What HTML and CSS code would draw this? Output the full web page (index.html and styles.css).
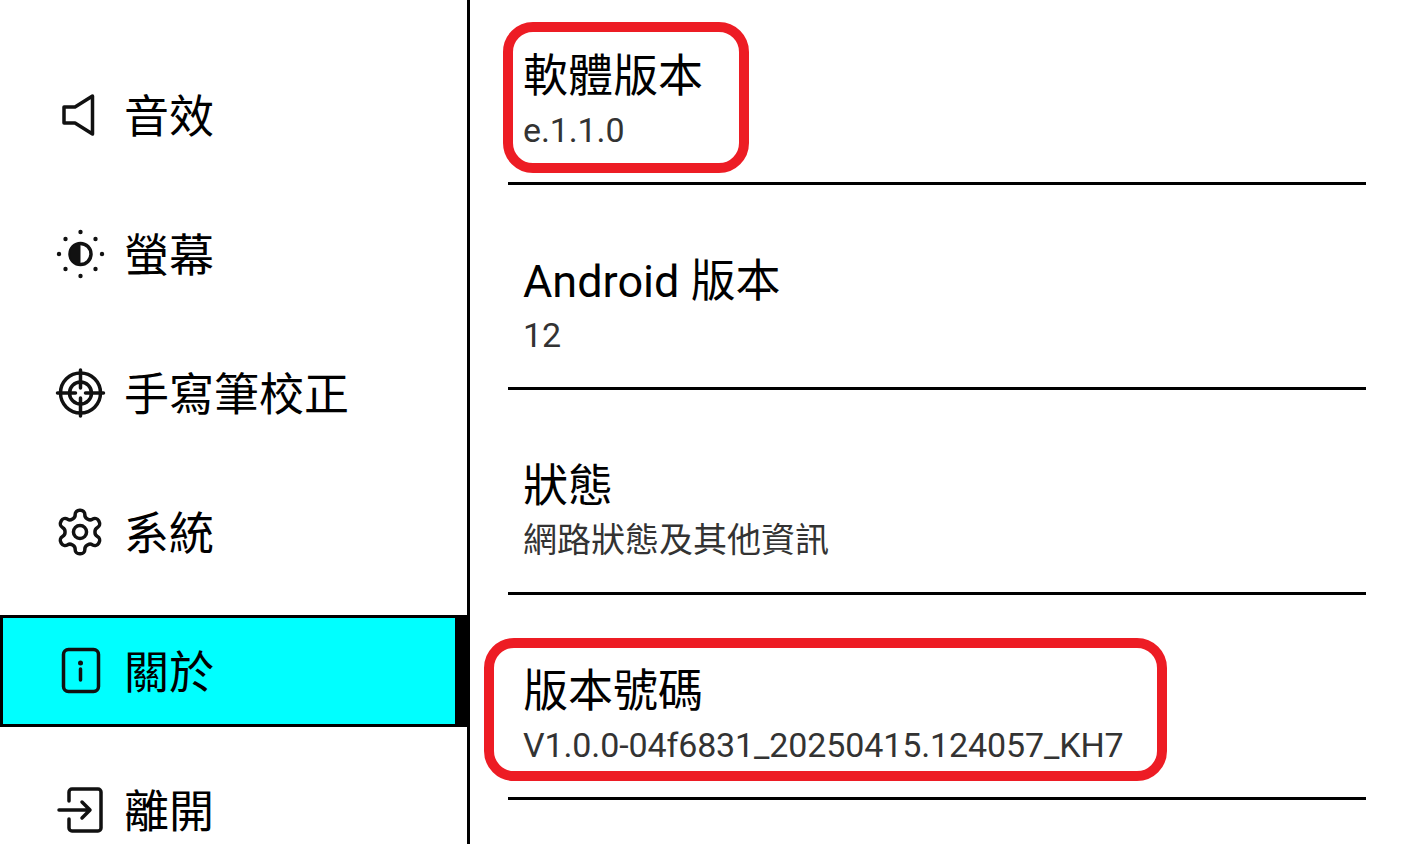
FILE: index.html
```html
<!DOCTYPE html>
<html lang="zh-TW">
<head>
    <meta charset="UTF-8">
    <meta name="viewport" content="width=device-width, initial-scale=1.0">
    <title>關於</title>
    <link rel="stylesheet" href="styles.css">
</head>
<body>
    <div class="page">
        <div class="sidebar">
            <div class="menu-item">
                <svg class="menu-icon" viewBox="0 0 48 48"><path d="M36.500 5 L19 16 H8 V32 H19 L36.500 43 Z"/></svg>
                <span>音效</span>
            </div>
            <div class="menu-item">
                <svg class="menu-icon" viewBox="0 0 48 48">
                    <circle cx="24.500" cy="24" r="10.500"/>
                    <path class="solid" d="M24.500 13.500 A10.500 10.500 0 0 0 24.500 34.500 Z"/>
                    <g class="solid">
                        <circle cx="24.500" cy="2" r="2.200"/><circle cx="24.500" cy="46" r="2.200"/>
                        <circle cx="3" cy="24" r="2.200"/><circle cx="46" cy="24" r="2.200"/>
                        <circle cx="9.500" cy="9" r="2.200"/><circle cx="39.500" cy="9" r="2.200"/>
                        <circle cx="9.500" cy="39" r="2.200"/><circle cx="39.500" cy="39" r="2.200"/>
                    </g>
                </svg>
                <span>螢幕</span>
            </div>
            <div class="menu-item">
                <svg class="menu-icon" viewBox="0 0 48 48">
                    <circle cx="24.500" cy="24" r="20"/>
                    <circle cx="24.500" cy="24" r="11"/>
                    <path d="M24.500 1 V19 M24.500 29 V47 M1.500 24 H19.500 M29.500 24 H47.500"/>
                </svg>
                <span>手寫筆校正</span>
            </div>
            <div class="menu-item">
                <svg class="menu-icon gear" viewBox="1 1 22 22">
                    <path d="M12.220 2h-.44a2 2 0 0 0-2 2v.18a2 2 0 0 1-1 1.730l-.43.25a2 2 0 0 1-2 0l-.15-.08a2 2 0 0 0-2.730.73l-.22.38a2 2 0 0 0 .73 2.730l.15.1a2 2 0 0 1 1 1.720v.51a2 2 0 0 1-1 1.740l-.15.09a2 2 0 0 0-.73 2.730l.22.38a2 2 0 0 0 2.730.73l.15-.08a2 2 0 0 1 2 0l.43.25a2 2 0 0 1 1 1.730V20a2 2 0 0 0 2 2h.44a2 2 0 0 0 2-2v-.18a2 2 0 0 1 1-1.730l.43-.25a2 2 0 0 1 2 0l.15.08a2 2 0 0 0 2.730-.73l.22-.39a2 2 0 0 0-.73-2.730l-.15-.08a2 2 0 0 1-1-1.740v-.5a2 2 0 0 1 1-1.740l.15-.09a2 2 0 0 0 .73-2.730l-.22-.38a2 2 0 0 0-2.730-.73l-.15.08a2 2 0 0 1-2 0l-.43-.25a2 2 0 0 1-1-1.730V4a2 2 0 0 0-2-2z"/>
                    <circle cx="12" cy="12" r="3"/>
                </svg>
                <span>系統</span>
            </div>
            <div class="menu-item active">
                <svg class="menu-icon" viewBox="0 0 48 48">
                    <rect x="7.500" y="2.500" width="35" height="42" rx="5"/>
                    <circle class="solid" cx="24.500" cy="16" r="2.500"/>
                    <path d="M24.500 22 V33"/>
                </svg>
                <span>關於</span>
            </div>
            <div class="menu-item">
                <svg class="menu-icon" viewBox="0 0 48 48">
                    <path d="M13 15 V6 a3 3 0 0 1 3 -3 H42 a3 3 0 0 1 3 3 V42 a3 3 0 0 1 -3 3 H16 a3 3 0 0 1 -3 -3 V33"/>
                    <path d="M3 24 H33 M26 16 L34 24 L26 32"/>
                </svg>
                <span>離開</span>
            </div>
        </div>

        <div class="main">
            <div class="info-row">
                <div class="info-title">軟體版本</div>
                <div class="info-value">e.1.1.0</div>
            </div>
            <div class="info-row">
                <div class="info-title">Android 版本</div>
                <div class="info-value">12</div>
            </div>
            <div class="info-row">
                <div class="info-title">狀態</div>
                <div class="info-value cjk">網路狀態及其他資訊</div>
            </div>
            <div class="info-row">
                <div class="info-title">版本號碼</div>
                <div class="info-value">V1.0.0-04f6831_20250415.124057_KH7</div>
            </div>

            <!-- red annotation frames over the rows -->
            <div class="mark mark-software"></div>
            <div class="mark mark-build"></div>
        </div>
    </div>
</body>
</html>
```

FILE: styles.css
```css
* {
    margin: 0;
    padding: 0;
    box-sizing: border-box;
}

body {
    font-family: Roboto, "Noto Sans CJK TC", sans-serif;
    background: white;
    color: black;
    height: 844px;
    overflow: hidden;
}

.page {
    display: flex;
    height: 844px;
    overflow: hidden;
}

.sidebar {
    width: 470px;
    flex-shrink: 0;
    border-right: 3px solid black;
    padding-top: 59px;
    display: flex;
    flex-direction: column;
    gap: 27px;
}

.menu-item {
    height: 112px;
    flex-shrink: 0;
    display: flex;
    align-items: center;
    gap: 22px;
    padding-left: 56px;
    font-size: 45px;
}

.menu-item span {
    margin-bottom: 3px;
    margin-left: -2px;
}

.menu-item.active {
    background: #00ffff;
    border: 3px solid black;
    border-right-width: 12px;
    padding-left: 53px;
}

.menu-icon {
    width: 48px;
    height: 48px;
    flex-shrink: 0;
    fill: none;
    stroke: #111;
    stroke-width: 3.500;
    stroke-linecap: round;
    stroke-linejoin: round;
    overflow: visible;
}

.menu-icon.gear {
    stroke-width: 1.600;
}

.menu-icon .solid {
    fill: #111;
    stroke: none;
}

.main {
    flex: 1;
    position: relative;
    padding: 0 38px;
    margin-top: -20px;
}

.info-row {
    height: 205px;
    border-bottom: 3px solid black;
    padding: 71px 15px 0;
}

.info-title {
    font-size: 45px;
    line-height: 52px;
}

.info-value {
    font-size: 34px;
    line-height: 40px;
    margin-top: 7px;
    color: #333;
    letter-spacing: -0.12px;
}

.info-value.cjk {
    letter-spacing: 0;
}

.mark {
    position: absolute;
    border: 10px solid #ed1c24;
    border-radius: 30px;
}

.mark-software {
    left: 33px;
    top: 42px;
    width: 246px;
    height: 151px;
}

.mark-build {
    left: 14px;
    top: 658px;
    width: 683px;
    height: 143px;
}
```
